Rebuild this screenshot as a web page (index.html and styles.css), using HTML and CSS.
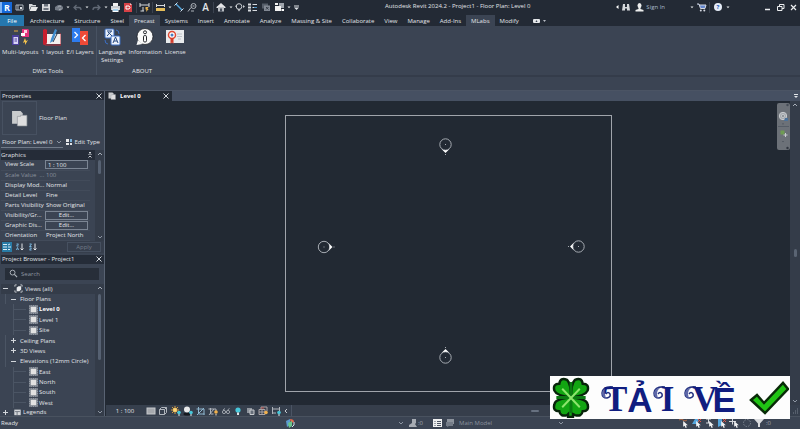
FILE: index.html
```html
<!DOCTYPE html>
<html lang="en">
<head>
<meta charset="utf-8">
<title>Autodesk Revit 2024.2 - Project1 - Floor Plan: Level 0</title>
<link rel="stylesheet" href="styles.css">
</head>
<body>
<svg class="defs" aria-hidden="true">
  <symbol id="dot" viewBox="0 0 6 10"><path d="M1.5 4.5h3L3 6.3z" fill="#e6e8eb"/></symbol>
  <symbol id="x" viewBox="0 0 8 8"><path d="M1.5 1.5l5 5M6.5 1.5l-5 5" stroke="#d5d9de" fill="none"/></symbol>
  <symbol id="down" viewBox="0 0 8 8"><path d="M2 3l2 2 2-2" stroke="#8d96a3" fill="none"/></symbol>
  <symbol id="up" viewBox="0 0 8 8"><path d="M2 5l2-2 2 2" stroke="#a7aeb8" fill="none"/></symbol>
  <symbol id="plan" viewBox="0 0 16 16"><path d="M1 1h8l2 2v10H1z" fill="#c9cbcd"/><path d="M6 6h3v-1h6v10H6z" fill="#dededf" stroke="#8d9299" stroke-width=".6"/></symbol>
  <symbol id="sheet" viewBox="0 0 10 10"><rect x=".5" y=".5" width="9" height="9" fill="#7e858f" stroke="#a5abb3" stroke-dasharray="1 1"/><rect x="2" y="2" width="6" height="6" fill="#e2e2e2"/></symbol>
  <symbol id="cursor" viewBox="0 0 6 6"><path d="M1 0v5l1.3-1 .8 2 1-.4-.8-1.9H5z" fill="#f0f1f2"/></symbol>
  <symbol id="curl" viewBox="0 0 12 26"><path d="M12 1Q2 0 1 7q0 5 5 5 4-1 3-4-2-3-4 0" fill="none" stroke="#22307f" stroke-width="1.500"/><path d="M1 7q1-5 6-5-3 2-3 6 0 3 2 4-5 0-5-5z" fill="#5d68a8"/></symbol>
</svg>
<div class="app">
  <header class="titlebar">
    <div class="quick">
      <button class="qb" aria-label="Revit"><svg viewBox="0 0 13 13"><rect x="0" y="1" width="12" height="11" fill="#1668d8"/><rect x="0" y="1" width="2" height="11" fill="#7fb2f4"/></svg><b class="logo">R</b></button>
      <button class="qb" aria-label="Home"><svg viewBox="0 0 13 13"><path d="M3 4h7M3 4v5h7V4M5 4v5" stroke="#aeb4bc" fill="none"/><path d="M7 6h2v2H7z" fill="#dfe2e6"/></svg></button>
      <button class="qb" aria-label="Open"><svg viewBox="0 0 13 13"><path d="M3 3h3l1 1h3v1.500H5L3 9.500z" fill="#d5d7da"/><path d="M5.200 6H12l-2 4H3.500z" fill="#e8e9ea"/></svg></button>
      <button class="qb" aria-label="Save"><svg viewBox="0 0 13 13"><path d="M3 3h8v7H3z" fill="#d8d9db"/><path d="M5 3h4v2.500H5zM4.500 7h5v2h-5z" fill="#6b727c"/></svg></button>
      <button class="qb" aria-label="Synchronize"><svg viewBox="0 0 13 13"><path d="M3 9V6l3-2h3l2 2v2l-3 2z" fill="#737a85"/><path d="M6 6.500a2 2 0 0 1 3-1M7 8.500l2.500-.5" stroke="#a5abb3" fill="none"/></svg></button>
      <svg class="qd"><use href="#dot"/></svg>
      <button class="qb" aria-label="Undo"><svg viewBox="0 0 13 13"><path d="M3 6.500h5q2 0 2 2.500M5.500 4L3 6.500 5.500 9" stroke="#626a76" stroke-width="1.300" fill="none"/></svg></button>
      <svg class="qd"><use href="#dot"/></svg>
      <button class="qb" aria-label="Redo"><svg viewBox="0 0 13 13"><path d="M10 6.500H5q-2 0-2 2.500M7.500 4L10 6.500 7.500 9" stroke="#626a76" stroke-width="1.300" fill="none"/></svg></button>
      <svg class="qd"><use href="#dot"/></svg>
      <button class="qb" aria-label="Print"><svg viewBox="0 0 13 13"><path d="M4 2h5v3H4z" fill="#f0f0f0"/><path d="M2 5h9v4H2z" fill="#c9ccd0"/><path d="M3.500 7.500h6V11h-6z" fill="#fff"/><path d="M4 8.500h5v1H4z" fill="#4ea5dd"/></svg></button>
      <button class="qb" aria-label="Export PDF"><svg viewBox="0 0 13 13"><path d="M2 2h6l2 2v7H2z" fill="#d64146"/><path d="M4 5h3q2 1.500 0 3H4z" fill="none" stroke="#fff"/><path d="M8 2l2 2H8z" fill="#f4c2c3"/></svg></button>
      <i class="qs"></i>
      <button class="qb" aria-label="Dimension"><svg viewBox="0 0 13 13"><path d="M2 2v4M11 2v4M2 4h9M5 6v4M2.500 10H6" stroke="#d5d8dc" fill="none"/><path d="M7.500 6h3l-1 2h1.200L8 11l.5-2.500h-1z" fill="#e9b44c"/></svg></button>
      <i class="qs"></i>
      <button class="qb" aria-label="Measure"><svg viewBox="0 0 13 13"><path d="M2.500 3v3M10.500 3v3M3 4.500h7" stroke="#d5d8dc" fill="none"/><path d="M2 7h9v3H2z" fill="#e5bd59"/></svg></button>
      <svg class="qd"><use href="#dot"/></svg>
      <button class="qb" aria-label="Aligned dimension"><svg viewBox="0 0 13 13"><path d="M3 3l6 6" stroke="#52a6df" stroke-width="1.400"/><path d="M1.500 4.500l3-3M7.500 10.500l3-3" stroke="#cfdfeb"/></svg></button>
      <button class="qb" aria-label="Tag"><svg viewBox="0 0 13 13"><circle cx="7.500" cy="5" r="2.500" fill="none" stroke="#aeb3ba"/><path d="M2 10.500l3-4M6.500 5h2M5 10h3" stroke="#aeb3ba"/></svg></button>
      <button class="qb txt" aria-label="Text">A</button>
      <i class="qs"></i>
      <button class="qb" aria-label="3D view"><svg viewBox="0 0 13 13"><path d="M1.500 6l4.500-4 4.500 4V7H1.500z" fill="#e4e5e7"/><path d="M3 6h6v4.500H3z" fill="#b9bdc3"/><path d="M5 7.500h2v3H5z" fill="#49515e"/></svg></button>
      <svg class="qd"><use href="#dot"/></svg>
      <button class="qb" aria-label="Section"><svg viewBox="0 0 13 13"><circle cx="5" cy="5.500" r="2.800" fill="none" stroke="#c9cdd2"/><path d="M1 5l2-1v3zM9 4l2 1.500L9 7zM3.500 8.300h3L5 10.500z" fill="#c9cdd2"/></svg></button>
      <button class="qb" aria-label="Thin lines"><svg viewBox="0 0 13 13"><path d="M1 3.500h3M1 6.500h3M1 9.500h3" stroke="#d9dce0" stroke-width="2"/><path d="M5.500 3.500H10M5.500 6.500H9M5.500 9.500H10" stroke="#d9dce0"/><path d="M7 6.500h3" stroke="#4c94c8"/></svg></button>
      <button class="qb" aria-label="Close inactive"><svg viewBox="0 0 13 13"><path d="M2 2.500h6v5H2z" fill="#555d69"/><path d="M4 4.500h6v5.500H4z" fill="#818893"/><path d="M6 6l2.500 2.500M8.500 6L6 8.500" stroke="#353d49"/></svg></button>
      <button class="qb" aria-label="Switch windows"><svg viewBox="0 0 13 13"><path d="M6 2h5v5H6z" fill="#9fa5ad"/><path d="M2 5h6v5H2zM2 2h3v2H2z" fill="#f2f2f2"/><path d="M8.500 8h2.500v2H8.500z" fill="#fff"/></svg></button>
      <svg class="qd"><use href="#dot"/></svg>
      <button class="qb narrow" aria-label="Customize"><svg viewBox="0 0 8 13"><path d="M2 5h5" stroke="#dfe2e6"/><path d="M2 6.500h5L4.500 9z" fill="#dfe2e6"/></svg></button>
    </div>
    <h1>Autodesk Revit 2024.2 - Project1 - Floor Plan: Level 0</h1>
    <div class="account">
      <svg class="qd" viewBox="0 0 6 10"><path d="M4.500 3v4L2 5z" fill="#fff"/></svg>
      <button class="qb" aria-label="Search"><svg viewBox="0 0 13 13"><path d="M3 3h2v3h2V3h2l1 6.500H7V7.500H5v2H2z" fill="#d5d8dc"/></svg></button>
      <button class="qb" aria-label="User"><svg viewBox="0 0 13 13"><ellipse cx="6.500" cy="4.500" rx="2" ry="2.500" fill="#eceded"/><path d="M5.500 6h2v2l3 1v1.500h-8V9l3-1z" fill="#eceded"/></svg></button>
      <button class="signin">Sign In</button>
      <svg class="qd"><use href="#dot"/></svg>
      <button class="qb" aria-label="Store"><svg viewBox="0 0 13 13"><path d="M2 3h2l1.500 4.500H10L11 4H4.500" fill="#6386cf" stroke="#d5d9e2"/><circle cx="5.800" cy="9.500" r="1" fill="#d5d9e2"/><circle cx="9.300" cy="9.500" r="1" fill="#d5d9e2"/></svg></button>
      <i class="qs"></i>
      <button class="qb help" aria-label="Help">?</button>
      <svg class="qd"><use href="#dot"/></svg>
    </div>
    <div class="window">
      <button class="qb" aria-label="Minimize"><svg viewBox="0 0 13 13"><path d="M4 8.500h5" stroke="#eceef0" stroke-width="1.500"/></svg></button>
      <button class="qb" aria-label="Restore"><svg viewBox="0 0 13 13"><path d="M5.500 5V3.500H10V7.500H8M3.500 5.500h4.500v4H3.500z" stroke="#eceef0" fill="none"/></svg></button>
      <button class="qb" aria-label="Close"><svg viewBox="0 0 13 13"><path d="M4 4l5 5M9 4L4 9" stroke="#eceef0" stroke-width="1.200"/></svg></button>
    </div>
  </header>
  <nav class="tabs">
    <button class="file">File</button><button>Architecture</button><button>Structure</button><button>Steel</button><button class="on">Precast</button><button>Systems</button><button>Insert</button><button>Annotate</button><button>Analyze</button><button>Massing &amp; Site</button><button>Collaborate</button><button>View</button><button>Manage</button><button>Add-Ins</button><button class="on">MLabs</button><button>Modify</button>
    <button class="media" aria-label="Ribbon display"><svg width="15" height="8" viewBox="0 0 15 8"><rect x="1" y="2" width="7" height="4" rx="1" fill="#e5e7ea"/><path d="M3.500 5h2L4.500 3z" fill="#3b4453"/><path d="M11 3h3l-1.500 2z" fill="#b5bac2"/></svg></button>
  </nav>
  <section class="ribbon">
    <div class="group">
      <div class="tools">
        <button><svg viewBox="0 0 18 18"><path d="M1 7h7v10H1z" fill="#4b3f9c"/><path d="M2.500 9H7v7H2.500z" fill="#d9d4f5"/><path d="M3.500 11h2.500M3.500 13h2.500" stroke="#4b3f9c"/><path d="M11 1h6l1 1v7h-7z" fill="#e2357b"/><path d="M13 2h3v3h-3z" fill="#fbd1e2"/><path d="M10 5h4v3h-4z" fill="#fff"/><path d="M3 3h4" stroke="#e5a93a"/><path d="M14 10l1 3 2-1-3 5v-3l-2 1z" fill="#f4c34d"/></svg>Multi-layouts</button>
        <button><svg viewBox="0 0 18 18"><path d="M2 6h16v10H1z" fill="#f2f0ef"/><path d="M0 2q2-2 4 0v12q0 3-3 3-1 0-1-2z" fill="#c81f2e"/><path d="M2 17h16V5" stroke="#b92b36" fill="none"/><path d="M12 1l2 1-4 11-3 2 1-4z" fill="#3f8ed0"/><path d="M16 2L10 14" stroke="#26384f"/></svg>1 layout</button>
        <button><svg viewBox="0 0 18 18"><path d="M1 0h8v14H1z" fill="#2d7cf0"/><path d="M9 3h8v14H9z" fill="#ef4a37"/><path d="M3.500 4l3 3-3 3M14.500 7l-3 3 3 3" stroke="#fff" stroke-width="1.300" fill="none"/></svg>E/I Layers</button>
      </div>
      <h2>DWG Tools</h2>
    </div>
    <div class="group">
      <div class="tools">
        <button><svg viewBox="0 0 18 18"><rect x="2" y="1" width="9" height="9" rx="1" fill="#e9f0fb" stroke="#3c6fc4"/><path d="M4 3h5M8.500 3L4 8M5 4l4 4" stroke="#24477f" fill="none"/><rect x="8" y="8" width="9" height="9" rx="1" fill="#eef3fc" stroke="#3c6fc4"/><path d="M10 15l2.500-6 2.500 6M11 13h3" stroke="#24477f" fill="none"/><path d="M13 2q3 0 3 4M5 16q-3 0-3-4" stroke="#3c6fc4" fill="none"/></svg>Language<br>Settings</button>
        <button><svg viewBox="0 0 18 18"><circle cx="9" cy="8.500" r="8" fill="#fafafa" stroke="#15181d" stroke-width=".7"/><path d="M2 12l-1.500 5 6-1z" fill="#fafafa"/><circle cx="9" cy="4.300" r="1.500" fill="none" stroke="#23262b"/><rect x="7.500" y="7.500" width="3" height="6.500" rx="1.300" fill="none" stroke="#23262b"/></svg>Information</button>
        <button><svg viewBox="0 0 18 18"><path d="M0 2h18v13H0z" fill="#e9ebed"/><circle cx="6" cy="7" r="3.500" fill="#fff" stroke="#e04a34" stroke-width="1.500"/><circle cx="6" cy="7" r="1.500" fill="#4a7ec2"/><path d="M4.500 10h3v6L6 14.500 4.500 16z" fill="#d63e2c"/><path d="M11 6h5M11 8.500h5M12 11h3" stroke="#bcc1c7"/></svg>License</button>
      </div>
      <h2>ABOUT</h2>
    </div>
  </section>
  <div class="options"></div>
  <main class="work">
    <aside class="side">
      <section class="panel">
        <header class="phead"><h3>Properties</h3><button aria-label="Close properties"><svg><use href="#x"/></svg></button></header>
        <div class="type"><div class="thumb"><svg><use href="#plan"/></svg></div><span>Floor Plan</span></div>
        <div class="instance">
          <label class="pick"><select aria-label="Element"><option>Floor Plan: Level 0</option></select><svg><use href="#down"/></svg></label>
          <button class="edittype"><svg viewBox="0 0 8 8"><path d="M1 1h3v3H1zM1 5h3v2H1z" fill="#e4e6e9"/><path d="M5 1h2v3H5z" fill="#78b1da"/><path d="M5 5h2v2H5z" fill="#e4e6e9"/></svg>Edit Type</button>
        </div>
        <div class="scroller">
          <div class="params">
            <div class="cat">Graphics<svg viewBox="0 0 8 8"><path d="M2.500 4L4 2.500 5.500 4M2.500 6.500L4 5l1.500 1.500M3 1.500h2" stroke="#dfe2e6" stroke-width=".9" fill="none"/></svg></div>
            <table>
              <tr><th><label for="scale">View Scale</label></th><td class="field"><input id="scale" value="1 : 100"></td></tr>
              <tr class="dim"><th>Scale Value &nbsp;...</th><td>100</td></tr>
              <tr><th>Display Mod...</th><td>Normal</td></tr>
              <tr><th>Detail Level</th><td>Fine</td></tr>
              <tr><th>Parts Visibility</th><td>Show Original</td></tr>
              <tr><th>Visibility/Gr...</th><td class="field"><button>Edit...</button></td></tr>
              <tr><th>Graphic Dis...</th><td class="field"><button>Edit...</button></td></tr>
              <tr><th>Orientation</th><td>Project North</td></tr>
            </table>
          </div>
          <div class="bar"><svg><use href="#up"/></svg><i class="short"></i><svg><use href="#down"/></svg></div>
        </div>
        <footer class="pfoot">
          <button class="sel" aria-label="Group"><svg viewBox="0 0 10 10"><path d="M1 2.500h4M1 5h4M1 7.500h4M6 3l2-1M6 5h3M6 7.500h2" stroke="#d8eef8"/></svg></button>
          <button aria-label="Sort ascending"><svg viewBox="0 0 10 10"><path d="M1.500 2h2L1.500 4h2M1.500 8l1-2.500 1 2.500" stroke="#77b5dd" fill="none"/><path d="M7 1.500v6M5.500 6.500L7 8l1.500-1.500" stroke="#e4e6e9" fill="none"/></svg></button>
          <button aria-label="Sort descending"><svg viewBox="0 0 10 10"><path d="M1.500 2h2L1.500 4.500h2M1.500 6h2L1.500 8h2" stroke="#77b5dd" fill="none"/><path d="M7 1.500v6M5.500 6.500L7 8l1.500-1.500" stroke="#e4e6e9" fill="none"/></svg></button>
          <button class="apply" disabled>Apply</button>
        </footer>
      </section>
      <section class="panel browser">
        <header class="phead"><h3>Project Browser - Project1</h3><button aria-label="Close browser"><svg><use href="#x"/></svg></button></header>
        <label class="search"><svg viewBox="0 0 10 10"><circle cx="4" cy="4" r="2.700" fill="none" stroke="#b4bac2"/><path d="M6 6l3 3" stroke="#b4bac2" stroke-width="1.200"/></svg><input type="search" placeholder="Search" aria-label="Search"></label>
        <div class="scroller">
          <ul class="tree">
            <li class="root"><b class="tg minus"></b><svg viewBox="0 0 10 10"><path d="M1 3V1h2M7 1h2v2M9 7v2H7M3 9H1V7" stroke="#c4c8ce" fill="none"/><path d="M3 4l2-1.500h3V6L6 8H3z" fill="#eceef0"/></svg>Views (all)</li>
            <li class="l1"><b class="tg minus"></b>Floor Plans</li>
            <li class="l2 current"><svg><use href="#sheet"/></svg>Level 0</li>
            <li class="l2"><svg><use href="#sheet"/></svg>Level 1</li>
            <li class="l2"><svg><use href="#sheet"/></svg>Site</li>
            <li class="l1"><b class="tg plus"></b>Ceiling Plans</li>
            <li class="l1"><b class="tg plus"></b>3D Views</li>
            <li class="l1"><b class="tg minus"></b>Elevations (12mm Circle)</li>
            <li class="l2"><svg><use href="#sheet"/></svg>East</li>
            <li class="l2"><svg><use href="#sheet"/></svg>North</li>
            <li class="l2"><svg><use href="#sheet"/></svg>South</li>
            <li class="l2"><svg><use href="#sheet"/></svg>West</li>
            <li class="last"><b class="tg plus"></b><svg viewBox="0 0 10 10"><path d="M1 2h8v7H1z" fill="#d5d7da"/><path d="M2 4.500h6M4.500 5v4" stroke="#59616d"/></svg>Legends</li>
          </ul>
          <div class="bar"><svg><use href="#up"/></svg><i class="long"></i><svg><use href="#down"/></svg></div>
        </div>
      </section>
    </aside>
    <section class="view">
      <div class="viewtabs">
        <div class="vtab"><svg><use href="#plan"/></svg><b>Level 0</b><button aria-label="Close view"><svg><use href="#x"/></svg></button></div>
        <button class="more" aria-label="More views"><svg viewBox="0 0 8 8"><path d="M2 2.500h4" stroke="#e3e6ea"/><path d="M2 4h4L4 6z" fill="#e3e6ea"/></svg></button>
      </div>
      <div class="canvasrow">
        <div class="canvas">
          <svg class="drawing" viewBox="0 0 684 304" aria-label="Level 0 floor plan">
            <rect x="179.500" y="14.500" width="326" height="276" fill="none" stroke="#a0a4ab"/>
            <g fill="none" stroke="#a6abb2">
              <g transform="translate(339.500 43.500)"><circle r="5.700"/><path d="M-.5 0h1M0 9.500v1"/><path d="M-4 4.500Q0 7 4 4.500L0 8.500z" fill="#fff" stroke="none"/></g>
              <g transform="translate(339.500 256.500) rotate(180)"><circle r="5.700"/><path d="M-.5 0h1M0 9.500v1"/><path d="M-4 4.500Q0 7 4 4.500L0 8.500z" fill="#fff" stroke="none"/></g>
              <g transform="translate(218 146) rotate(-90)"><circle r="5.700"/><path d="M-.5 0h1M0 9.500v1"/><path d="M-4 4.500Q0 7 4 4.500L0 8.500z" fill="#fff" stroke="none"/></g>
              <g transform="translate(472.500 145.500) rotate(90)"><circle r="5.700"/><path d="M-.5 0h1M0 9.500v1"/><path d="M-4 4.500Q0 7 4 4.500L0 8.500z" fill="#fff" stroke="none"/></g>
            </g>
          </svg>
          <div class="navbar">
            <svg viewBox="0 0 13 47"><circle cx="10.500" cy="2" r="1.200" fill="#444b55"/><circle cx="6" cy="13" r="3.700" fill="#a5a9ae" stroke="#c9cccf"/><circle cx="6" cy="13" r="1.600" fill="#8b9096" stroke="#d9dbdd" stroke-width=".6"/><path d="M8 15h3v3H7z" fill="#4b7199"/><path d="M5 20.500h2l-1 1.300zM5 38h2l-1 1.300z" fill="#464d57"/><path d="M1 23.500h11" stroke="#555c66"/><path d="M3.500 27.500h4v4h-4z" fill="#6f9c53"/><path d="M6.500 32h4M8.500 30v4" stroke="#c9ccd0"/><circle cx="10.500" cy="45" r="1.200" fill="#30363f"/></svg>
          </div>
        </div>
        <div class="bar vbar"><svg><use href="#up"/></svg><i></i><svg><use href="#down"/></svg></div>
      </div>
      <div class="viewbar">
        <button class="ratio">1 : 100</button>
        <button aria-label="Detail level"><svg viewBox="0 0 12 10"><rect x="2" y="2" width="8" height="6" fill="#a6a9ae" stroke="#c6c9cd"/></svg></button>
        <button aria-label="Visual style"><svg viewBox="0 0 12 10"><path d="M2.500 3.500h5v5h-5zM2.500 3.500l2-2h5v5l-2 2M7.500 3.500l2-2" stroke="#b0b5bc" fill="none"/></svg></button>
        <button aria-label="Sun path"><svg viewBox="0 0 12 10"><path d="M5 0v8M1 4h8M2 1l6 6M8 1L2 7" stroke="#d99d3c"/><circle cx="5" cy="4" r="2" fill="#ffd778"/><circle cx="9" cy="6.500" r="1.800" fill="#47c7da"/><path d="M9 8v2" stroke="#d8e9ec"/></svg></button>
        <button aria-label="Shadows"><svg viewBox="0 0 12 10"><ellipse cx="5" cy="8" rx="3.500" ry="1.500" fill="#15191f"/><circle cx="5" cy="3.500" r="3" fill="#e8e9ea"/><circle cx="9" cy="6.500" r="1.800" fill="#47c7da"/><path d="M9 8v2" stroke="#d8e9ec"/></svg></button>
        <button aria-label="Crop view"><svg viewBox="0 0 12 10"><path d="M3.500 1v7h6M1.500 3H9v6M2 9l7-7" stroke="#8eb6cf" fill="none"/></svg></button>
        <button aria-label="Crop region"><svg viewBox="0 0 12 10"><path d="M3.500 2v6h3M1.500 3H9v2M2 9l5-6" stroke="#b0b5bc" fill="none"/><circle cx="9" cy="6" r="1.800" fill="#f1b04c"/><path d="M9 8v1.500" stroke="#e9dfcb"/></svg></button>
        <button aria-label="Hide"><svg viewBox="0 0 12 10"><circle cx="4" cy="6" r="1.600" stroke="#9fa5ad" fill="none"/><circle cx="8" cy="6" r="1.600" stroke="#9fa5ad" fill="none"/><path d="M3 4l2-1.500M7.500 4l2-1.500" stroke="#9fa5ad"/></svg></button>
        <button aria-label="Reveal"><svg viewBox="0 0 12 10"><circle cx="6" cy="4" r="2.600" fill="#47c7da"/><path d="M5 6.500h2V9H5z" fill="#e2e5e8"/></svg></button>
        <button aria-label="View properties"><svg viewBox="0 0 12 10"><path d="M2 2h5v5H2z" fill="#8f959e"/><path d="M5 4h4v4.500H5z" fill="#666e7a" stroke="#c6c9cd"/></svg></button>
        <button aria-label="Analytical model"><svg viewBox="0 0 12 10"><path d="M2 3.500h6v5H2zM4 3V1h6v4M2 6h6M5 3.500v5" stroke="#a9a3a6" fill="none"/><circle cx="9" cy="6.500" r="1.800" fill="#f1b04c"/><path d="M4 2h3" stroke="#c75a54"/></svg></button>
        <button aria-label="Constraints"><svg viewBox="0 0 12 10"><path d="M2.500 1v7M9.500 1v4M3 3h6M3 7h3" stroke="#b0b5bc"/><circle cx="9" cy="6.500" r="1.800" fill="#47c7da"/><path d="M9 8v2" stroke="#d8e9ec"/></svg></button>
        <button class="left" aria-label="Scroll left"><svg viewBox="0 0 8 10"><path d="M5 3L3 5l2 2" stroke="#c6cad0" fill="none"/></svg></button>
        <div class="hbar"><i></i></div>
        <svg class="grip" viewBox="0 0 10 10"><path d="M7 3h1M5 5h1M7 5h1M3 7h1M5 7h1M7 7h1" stroke="#77808d"/></svg>
      </div>
    </section>
  </main>
  <footer class="status">
    <span class="ready">Ready</span>
    <svg class="net" viewBox="0 0 12 12"><path d="M2 4l4-2v6l-3 2z" fill="#5c9bd0"/><path d="M6 2q4 0 4 3L7 6z" fill="#e0694b"/><path d="M4 6l4-2v5l-3 2z" fill="#69c58b"/><path d="M10 5v3l-2 2" stroke="#d5e4ee" fill="none"/></svg>
    <div class="sets">
      <svg class="s8"><use href="#down"/></svg>
      <svg class="s10" viewBox="0 0 10 10"><path d="M4 1h4v4l-1 1 2 3H1V7l3-2z" fill="#a6abb3"/></svg><span class="faint">:0</span>
    </div>
    <div class="model">
      <svg class="s10" viewBox="0 0 10 10"><path d="M1 1h9v8H1z" fill="#eff0f1"/><path d="M2.500 3.500h1M5 3.500h4M2.500 5.500h1M5 5.500h4M2.500 7.500h1M5 7.500h4" stroke="#4b5462"/></svg>
      <svg class="s10" viewBox="0 0 10 10"><path d="M2 1h7v5H2z" fill="#8c939d"/><path d="M1 4h7v4H4L2 9V8H1z" fill="#747c88"/></svg>
      <label class="pick"><select aria-label="Design option"><option>Main Model</option></select><svg><use href="#down"/></svg></label>
    </div>
    <div class="filters">
      <svg viewBox="0 0 12 12"><path d="M1 3q2-2 4 0t4 0" stroke="#b26a46" fill="none"/><use href="#cursor" x="4" y="4" width="7" height="7"/></svg>
      <svg viewBox="0 0 12 12"><path d="M1 7l3-5h4L6 7z" fill="#55a5dc"/><path d="M7 2l3 3M10 2L7 5" stroke="#e15448"/><use href="#cursor" x="4" y="4" width="7" height="7"/></svg>
      <svg viewBox="0 0 12 12"><path d="M3 2h5M5.500 2v4M3 6h4" stroke="#d5d8dc"/><use href="#cursor" x="5" y="4" width="7" height="7"/></svg>
      <svg viewBox="0 0 12 12"><path d="M2 2l4-1v7l-4 2z" fill="#55a5dc"/><path d="M7 2l3 3M10 2L7 5" stroke="#e15448"/><use href="#cursor" x="4" y="4" width="7" height="7"/></svg>
      <svg viewBox="0 0 12 12"><path d="M1 4.500h7M4.500 1.500v6" stroke="#d5d8dc"/><use href="#cursor" x="5" y="4" width="7" height="7"/></svg>
      <svg viewBox="0 0 12 12"><circle cx="6" cy="6" r="3.500" fill="none" stroke="#7d8591" stroke-dasharray="1.500 1.200"/></svg>
      <svg viewBox="0 0 12 12"><path d="M1 2h10L7 6.500V10H5V6.500z" fill="#d9dbde"/></svg><span class="faint">:0</span>
    </div>
  </footer>
</div>
<a class="download" href="#">
  <svg class="clover" viewBox="0 0 40 42"><path d="M20 21Q20 7 24 3q7-3 8 4 7 0 5 7-2 5-17 7 16 1 17 7 2 7-5 7-1 6-8 4l-2-1v3h-5v-3l-1 1q-7 2-8-4-7 0-5-7 1-6 17-7Q5 19 3 14 1 7 8 7 9 0 16 3q4 4 4 18z" fill="#12a512" stroke="#07230a" stroke-width="2.500"/><path d="M20 5v32M5 21h30" stroke="#0b7a12" stroke-width="3"/><path d="M11 12l18 19M29 12L11 31" stroke="#8ee56d" stroke-width="2"/></svg>
  <span class="word"><svg class="curl over"><use href="#curl"/></svg><span class="fancy">T</span><span class="plain">Ả</span><svg class="curl"><use href="#curl"/></svg><span class="fancy">I</span></span>
  <span class="word second"><svg class="curl"><use href="#curl"/></svg><span class="fancy">V</span><span class="plain tight">Ề</span></span>
  <svg class="check" viewBox="0 0 40 34"><path d="M2 19l6-5 7 8L34 2l5 6-23 24z" fill="#20c414" stroke="#092b08" stroke-width="2.500"/></svg>
</a>
</body>
</html>
```
FILE: styles.css
```css
* { box-sizing: border-box; }
:root {
  --dark: #232a35;
  --panel: #3b4453;
  --edge: #596373;
  --text: #e2e5e9;
}
body {
  margin: 0;
  background: var(--panel);
  color: var(--text);
  font: 6px/10px "Open Sans", "Noto Sans", sans-serif;
}
button, input, select {
  margin: 0;
  padding: 0;
  border: 0;
  background: none;
  color: inherit;
  font: inherit;
  appearance: none;
}
h1, h2, h3 { margin: 0; font: inherit; }
svg { display: block; flex: none; }
.defs { position: absolute; width: 0; height: 0; }
.app { display: flex; flex-direction: column; height: 100vh; overflow: hidden; }

/* title bar */
.titlebar {
  display: flex;
  align-items: center;
  height: 14px;
  background: var(--dark);
}
.quick, .account, .window { display: flex; align-items: center; }
.qb { position: relative; width: 13px; height: 13px; flex: none; }
.qb svg { width: 13px; height: 13px; }
.qb.narrow, .qb.narrow svg { width: 8px; }
.qb.txt { font-size: 10px; font-weight: 600; line-height: 13px; }
.qb.help {
  width: 8px;
  height: 8px;
  margin: 0 3px;
  border-radius: 50%;
  background: #e6edf8;
  color: #1c58b8;
  font-weight: 700;
  line-height: 8px;
}
.logo { position: absolute; inset: 0 0 0 1px; color: #fff; font-size: 9px; line-height: 13px; text-align: center; }
.qd { width: 6px; height: 10px; }
.qs { width: 1px; height: 11px; margin: 0 1px; background: #3b4350; }
.titlebar h1 { margin-left: 85px; line-height: 12px; margin-bottom: 2px; white-space: nowrap; }
.account { margin-left: auto; }
.signin { margin-right: 24px; color: #a9bccb; }
.window { margin-left: 30px; }

/* ribbon */
.tabs { display: flex; align-items: flex-end; height: 12px; background: var(--dark); }
.tabs button { height: 11px; padding: 0 5px; line-height: 10px; white-space: nowrap; }
.tabs .file { width: 24px; margin-right: 1px; background: #2577ae; color: #fff; }
.tabs .on { background: var(--panel); }
.tabs .media { margin-left: 3px; }
.ribbon {
  display: flex;
  height: 51px;
  border-bottom: 2px solid #343c4a;
}
.group {
  display: flex;
  flex-direction: column;
  justify-content: space-between;
  padding: 2px 2px 0;
  border-right: 1px solid #485262;
}
.group:last-child { border: 0; }
.tools { display: flex; align-items: flex-start; gap: 3px; }
.tools button { line-height: 8px; }
.tools svg { width: 18px; height: 18px; margin: 0 auto 2px; }
.group h2 { text-align: center; line-height: 8px; }
.options { height: 14px; border-bottom: 1px solid #4b5464; }

/* side panels */
.work { display: flex; flex: 1; min-height: 0; }
.side { display: flex; flex-direction: column; width: 105px; padding-left: 1px; border-right: 1px solid var(--edge); }
.panel { display: flex; flex-direction: column; }
.browser { flex: 1; min-height: 0; margin-top: 2px; }
.phead {
  display: flex;
  justify-content: space-between;
  align-items: center;
  height: 9px;
  padding: 0 1px;
  background: #252c38;
}
.phead svg { width: 8px; height: 8px; }
.type { display: flex; align-items: center; gap: 2px; padding: 1px; }
.thumb { display: grid; place-items: center; width: 35px; height: 34px; border: 1px solid #475161; }
.thumb svg { width: 17px; height: 17px; }
.instance { display: flex; justify-content: space-between; height: 14px; padding-right: 4px; }
.pick { display: flex; align-items: center; }
.instance .pick { width: 62px; border-bottom: 1px solid #717b89; height: 12px; }
.pick select { flex: 1; min-width: 0; padding-left: 1px; height: 10px; line-height: 10px; overflow: visible; }
.pick svg { width: 8px; height: 8px; pointer-events: none; }
.edittype { display: flex; align-items: center; gap: 1px; height: 12px; }
.edittype svg { width: 8px; height: 8px; }
.scroller { display: flex; flex: 1; min-height: 0; }
.params { flex: 1; }
.cat { display: flex; justify-content: space-between; align-items: center; height: 10px; background: #252c38; padding-right: 1px; }
.cat svg { width: 8px; height: 8px; }
table { width: 89px; border-collapse: collapse; table-layout: fixed; }
th, td { height: 10px; padding: 0; overflow: hidden; border-bottom: 1px solid #424b5a; font-weight: 400; text-align: left; line-height: 9px; white-space: nowrap; }
th { width: 44px; padding-left: 4px; }
td { padding-left: 1px; }
td.field { padding-left: 0; }
td input, td button { display: block; width: 43px; height: 9px; padding: 0 2px; border: 1px solid #7b8593; line-height: 7px; }
td button { text-align: center; }
.dim { color: #8a929e; }
.bar { display: flex; flex-direction: column; align-items: center; width: 9px; background: #343c49; }
.bar svg { width: 8px; height: 8px; }
.bar i { width: 3px; border-radius: 2px; background: #566172; margin: 2px 0 auto; }
.bar .short { height: 14px; }
.bar .long { height: 66px; }
.pfoot { display: flex; align-items: center; gap: 3px; height: 12px; padding: 0 3px 0 1px; background: #363e4c; }
.pfoot svg { width: 10px; height: 10px; }
.pfoot .sel { background: #287ba6; }
.pfoot .apply { width: 34px; height: 10px; margin-left: auto; border: 1px solid #465060; color: #747d8a; line-height: 8px; }
.search { display: flex; align-items: center; gap: 3px; height: 12px; margin: 4px 5px 4px 4px; padding-left: 4px; background: #272e39; }
.search svg { width: 9px; height: 9px; }
.search input { flex: 1; min-width: 0; height: 10px; }
.search input::placeholder { color: #8e96a1; opacity: 1; }

.tree {
  display: grid;
  grid-template-rows: repeat(12, 1fr) 8px;
  flex: 1;
  margin: 0;
  padding: 0;
  overflow: hidden;
  list-style: none;
}
.tree li { display: flex; align-items: center; min-height: 0; white-space: nowrap; }
.tree svg { width: 9px; height: 9px; margin-right: 1px; }
.tree .root { gap: 1px; background: #343c49; }
.tree .root .tg { margin: 0 5px 0 2px; }
.tree .l1 .tg { margin: 0 4px 0 10px; }
.tree .l1, .tree .l2 { background: linear-gradient(#4b5564, #4b5564) 4px 0 / 1px 100% no-repeat; }
.tree .l2 { margin-left: 9px; padding-left: 19px; background: linear-gradient(#4b5564, #4b5564) 3px 0 / 1px 100% no-repeat, linear-gradient(#4b5564, #4b5564) 3px 50% / 13px 1px no-repeat; }
.tree .last { line-height: 8px; }
.tree .last svg { height: 8px; }
.tree .last .tg { margin: 0 5px 0 2px; }
.tree .current { color: #fff; font-weight: 700; }
.tg { width: 5px; height: 5px; background: linear-gradient(#d2d6db, #d2d6db) 0 2px / 5px 1px no-repeat; }
.tg.plus { background: linear-gradient(#d2d6db, #d2d6db) 0 2px / 5px 1px no-repeat, linear-gradient(#d2d6db, #d2d6db) 2px 0 / 1px 5px no-repeat; }

/* drawing view */
.view { display: flex; flex-direction: column; flex: 1; min-width: 0; padding-left: 1px; background: #222933; }
.viewtabs { display: flex; justify-content: space-between; height: 10px; background: #465062; }
.vtab { display: flex; align-items: center; width: 66px; padding: 0 2px; background: #222933; color: #fff; }
.vtab > svg { width: 8px; height: 8px; margin-right: 4px; }
.vtab button { margin-left: auto; }
.vtab button svg, .more svg { width: 8px; height: 8px; }
.canvasrow { display: flex; flex: 1; min-height: 0; }
.canvas { position: relative; flex: 1; min-width: 0; }
.drawing { width: 100%; height: 100%; }
.navbar { position: absolute; top: 2px; right: 0; width: 13px; height: 47px; border-radius: 2px; background: #6c7178; }
.navbar svg { width: 13px; height: 47px; }
.vbar { width: 10px; }
.vbar i { height: 8px; margin: auto; background: #5a6473; }
.viewbar { display: flex; align-items: center; height: 11px; background: #363f4d; }
.viewbar button { width: 12px; margin-right: 1px; }
.viewbar button:nth-of-type(even) { margin-right: 0; }
.viewbar button svg { width: 12px; height: 10px; }
.viewbar .ratio { width: 38px; text-align: center; }
.viewbar .left, .viewbar .left svg { width: 8px; }
.hbar { flex: 1; display: flex; align-items: center; height: 11px; border-left: 1px solid #4b5464; background: #363e4b; }
.hbar i { width: 8px; height: 2px; margin-left: 48%; border-radius: 1px; background: #677180; }
.grip { width: 10px; height: 10px; }

/* status bar */
.status {
  display: grid;
  grid-template-columns: 284px 113px 35px 246px 1fr;
  align-items: center;
  height: 13px;
  border-top: 1px solid #49525f;
}
.ready { padding-left: 1px; }
.net { width: 12px; height: 12px; }
.sets, .model, .filters { display: flex; align-items: center; }
.s8 { width: 8px; height: 8px; }
.s10 { width: 10px; height: 10px; }
.sets .s10 { margin-left: 3px; }
.model { gap: 3px; }
.model .pick { width: 107px; color: #8a929e; }
.faint { color: #a0a6af; }
.filters svg { width: 12px; height: 12px; margin-right: 1px; }
.filters svg:nth-of-type(even) { margin-right: 0; }

/* download banner */
.download {
  position: fixed;
  right: 10px;
  bottom: 10px;
  display: flex;
  align-items: center;
  width: 240px;
  height: 43px;
  overflow: hidden;
  background: #fdfdfd;
  color: #101d80;
  text-decoration: none;
}
.clover { width: 40px; height: 41px; margin: 0 10px 0 1px; }
.word { display: flex; align-items: center; font-size: 35px; line-height: 43px; padding-top: 3px; }
.fancy { font-family: "Liberation Serif", serif; font-weight: 700; }
.plain { font-family: "Liberation Sans", sans-serif; font-weight: 700; }
.plain.tight { margin-left: -5px; }
.curl { width: 12px; height: 26px; margin-right: -4px; }
.curl.over { margin-right: -9px; }
.second { margin-left: 10px; }
.check { width: 40px; height: 34px; margin: 0 1px 0 auto; }
```
